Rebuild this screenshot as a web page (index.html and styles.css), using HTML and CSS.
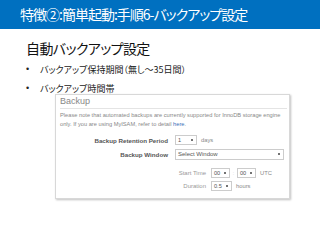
FILE: index.html
```html
<!DOCTYPE html>
<html lang="ja">
<head>
    <meta charset="UTF-8">
    <meta name="viewport" content="width=device-width, initial-scale=1.0">
    <link rel="stylesheet" href="styles.css">
    <title>特徴②</title>
</head>
<body>
    <div class="title-bar">特徴②:簡単起動:手順6-バックアップ設定</div>

    <div class="content">
        <h1 class="heading">自動バックアップ設定</h1>
        <ul class="points">
            <li>バックアップ保持期間（無し〜35日間）</li>
            <li>バックアップ時間帯</li>
        </ul>

        <div class="shot">
            <div class="shot-title">Backup</div>
            <p class="note">Please note that automated backups are currently supported for InnoDB storage engine only. If you are using MyISAM, refer to detail <a>here</a>.</p>

            <div class="row first">
                <div class="label">Backup Retention Period</div>
                <div class="controls">
                    <span class="select small">1</span>
                    <span class="unit">days</span>
                </div>
            </div>
            <div class="row">
                <div class="label">Backup Window</div>
                <div class="controls">
                    <span class="select wide">Select Window</span>
                </div>
            </div>
            <div class="sub-row start">
                <div class="sub-label">Start Time</div>
                <div class="controls">
                    <span class="select tiny">00</span>
                    <span class="sep">:</span>
                    <span class="select tiny">00</span>
                    <span class="unit">UTC</span>
                </div>
            </div>
            <div class="sub-row">
                <div class="sub-label">Duration</div>
                <div class="controls">
                    <span class="select mid">0.5</span>
                    <span class="unit">hours</span>
                </div>
            </div>
        </div>
    </div>
</body>
</html>
```

FILE: styles.css
```css
body {
    margin: 0;
    width: 320px;
    height: 240px;
    background: #fff;
    font-family: "Noto Sans CJK JP", "Noto Sans", sans-serif;
    font-feature-settings: "palt";
    overflow: hidden;
}

.title-bar {
    height: 29px;
    line-height: 29px;
    padding-left: 20px;
    background-color: #0070c0;
    color: #fff;
    font-size: 14px;
    letter-spacing: -1px;
}

.content {
    padding-left: 26px;
}

.heading {
    margin: 9px 0 0;
    font-size: 14px;
    font-weight: normal;
    line-height: 20px;
    letter-spacing: -0.6px;
    color: #111;
}

.points {
    margin: 2px 0 0;
    padding: 0;
    list-style: none;
}

.points li {
    position: relative;
    padding-left: 14px;
    font-size: 9px;
    line-height: 19px;
    color: #222;
}

.points li::before {
    content: "•";
    position: absolute;
    left: 0;
    font-family: "Liberation Sans", sans-serif;
}

.shot {
    margin: -4px 0 0 29px;
    width: 235px;
    height: 105px;
    border: 1px solid #d8d8d8;
    box-shadow: 1px 1px 2px rgba(0, 0, 0, 0.25);
    box-sizing: border-box;
    padding: 2px 2px 0 4px;
    font-family: "Liberation Sans", Arial, sans-serif;
    font-feature-settings: normal;
    color: #666;
}

.shot-title {
    font-size: 9px;
    line-height: 9px;
    color: #888;
    border-bottom: 1px solid #e4e4e4;
    padding-bottom: 2px;
}

.note {
    margin: 2px 0 0;
    font-size: 5.7px;
    line-height: 9px;
    color: #888;
}

.note a {
    color: #3a6fb8;
}

.row {
    display: grid;
    grid-template-columns: 108px 1fr;
    column-gap: 7px;
    align-items: center;
    height: 12px;
    margin-top: 2px;
}

.row.first {
    margin-top: 5px;
}

.label {
    text-align: right;
    font-size: 6.2px;
    font-weight: bold;
    color: #555;
    white-space: nowrap;
}

.controls {
    display: flex;
    align-items: center;
}

.select {
    position: relative;
    box-sizing: border-box;
    height: 10px;
    line-height: 8px;
    border: 1px solid #ccc;
    padding-left: 2px;
    font-size: 5.6px;
    color: #555;
}

.select::after {
    content: "";
    position: absolute;
    right: 3px;
    top: 3px;
    width: 2px;
    height: 2px;
    border-radius: 1px;
    background: #444;
}

.small {
    width: 22px;
}

.wide {
    width: 109px;
    height: 11px;
    line-height: 9px;
    font-size: 6px;
}

.tiny {
    width: 19px;
}

.mid {
    width: 21px;
}

.unit {
    margin-left: 4px;
    font-size: 5.8px;
    color: #888;
}

.sub-row {
    display: grid;
    grid-template-columns: 146px 1fr;
    column-gap: 5px;
    align-items: center;
    height: 12px;
    margin-top: 1px;
}

.sub-row.start {
    margin-top: 7px;
}

.sub-label {
    text-align: right;
    font-size: 6px;
    color: #999;
    white-space: nowrap;
}

.sep {
    width: 7px;
    text-align: center;
    font-size: 5px;
    color: #ccc;
}
```
